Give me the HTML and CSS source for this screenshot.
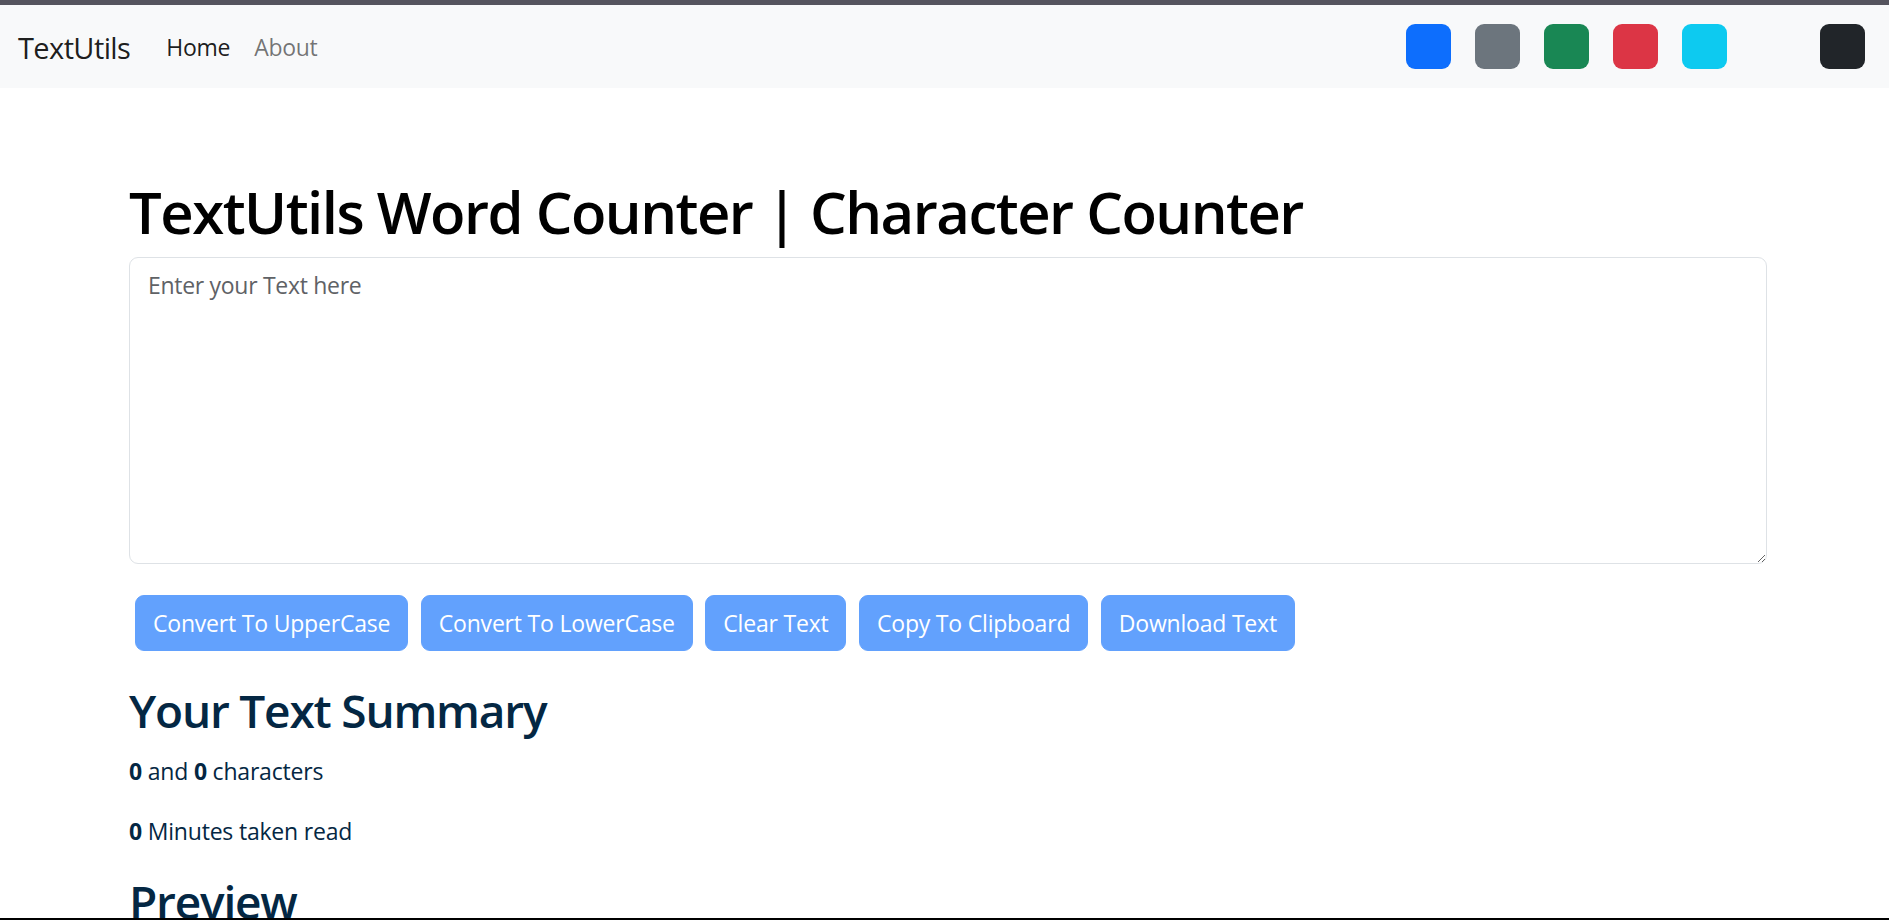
FILE: index.html
```html
<!DOCTYPE html>
<html lang="en">
<head>
<meta charset="utf-8">
<title>TextUtils - Home</title>
<link rel="stylesheet" href="styles.css">
</head>
<body>
<div class="frame">
  <nav class="navbar">
    <a class="brand" href="#">TextUtils</a>
    <ul class="nav-links">
      <li><a class="nav-link active" href="#">Home</a></li>
      <li><a class="nav-link" href="#">About</a></li>
    </ul>
    <div class="swatches">
      <span class="swatch sw-primary"></span>
      <span class="swatch sw-secondary"></span>
      <span class="swatch sw-success"></span>
      <span class="swatch sw-danger"></span>
      <span class="swatch sw-info"></span>
      <span class="swatch sw-light"></span>
      <span class="swatch sw-dark"></span>
    </div>
  </nav>
  <main class="container">
    <h1 class="title">TextUtils Word Counter | Character Counter</h1>
    <textarea class="text-input" placeholder="Enter your Text here"></textarea>
    <div class="actions">
      <button class="btn" disabled>Convert To UpperCase</button>
      <button class="btn" disabled>Convert To LowerCase</button>
      <button class="btn" disabled>Clear Text</button>
      <button class="btn" disabled>Copy To Clipboard</button>
      <button class="btn" disabled>Download Text</button>
    </div>
    <section class="summary">
      <h2 class="section-title">Your Text Summary</h2>
      <p class="stat"><b>0</b> and <b>0</b> characters</p>
      <p class="stat"><b>0</b> Minutes taken read</p>
      <h2 class="section-title preview-title">Preview</h2>
      <p class="stat">Nothing to preview!</p>
    </section>
  </main>
</div>
</body>
</html>
```

FILE: styles.css
```css
* { box-sizing: border-box; }

html, body {
  margin: 0;
  padding: 0;
  background: #ffffff;
}

body {
  font-family: "Open Sans", "Noto Sans", sans-serif;
  color: #212529;
}

.frame {
  height: 920px;
  overflow: hidden;
  border-top: 5px solid #55545e;
  border-bottom: 2px solid #000000;
  display: flex;
  flex-direction: column;
}

/* Navbar */
.navbar {
  flex: 0 0 83px;
  display: flex;
  align-items: center;
  background: #f8f9fa;
  padding: 2px 24px 0 18px;
}

.brand {
  font-size: 29px;
  letter-spacing: -0.6px;
  color: rgba(0, 0, 0, 0.9);
  text-decoration: none;
  margin-right: 24px;
  line-height: 1.5;
}

.nav-links {
  list-style: none;
  margin: 0;
  padding: 0;
  display: flex;
}

.nav-link {
  display: block;
  padding: 8px 12px;
  font-size: 23px;
  letter-spacing: -0.3px;
  line-height: 1.5;
  color: rgba(0, 0, 0, 0.55);
  text-decoration: none;
}

.nav-link.active {
  color: rgba(0, 0, 0, 0.9);
}

.swatches {
  margin-left: auto;
  margin-top: -2px;
  display: flex;
  gap: 24px;
}

.swatch {
  display: block;
  width: 45px;
  height: 45px;
  border-radius: 9px;
}

.sw-primary { background: #0d6efd; }
.sw-secondary { background: #6c757d; }
.sw-success { background: #198754; }
.sw-danger { background: #dc3545; }
.sw-info { background: #0dcaf0; }
.sw-light { background: #f8f9fa; }
.sw-dark { background: #212529; }

/* Main */
.container {
  margin-left: 129px;
  width: 1638px;
}

.title {
  margin: 88px 0 9px;
  font-size: 58px;
  font-weight: 600;
  letter-spacing: -1.5px;
  line-height: 72px;
  color: #000000;
}

.text-input {
  display: block;
  width: 100%;
  height: 307px;
  padding: 9px 18px;
  font-family: "Open Sans", "Noto Sans", sans-serif;
  font-size: 23px;
  letter-spacing: -0.3px;
  line-height: 36px;
  color: #212529;
  background: #ffffff;
  border: 1.5px solid #dee2e6;
  border-radius: 9px;
  resize: vertical;
  outline: none;
}

.text-input::placeholder {
  color: #5f6266;
  opacity: 1;
}

.actions {
  display: flex;
  gap: 12.5px;
  padding-left: 6px;
  margin-top: 31px;
}

.btn {
  height: 56px;
  padding: 9px 17px;
  font-family: "Open Sans", "Noto Sans", sans-serif;
  font-size: 23px;
  letter-spacing: -0.2px;
  line-height: 36px;
  color: #ffffff;
  background: #62a1fd;
  border: 1px solid #62a1fd;
  border-radius: 9px;
}

.summary {
  color: #042743;
}

.section-title {
  margin: 31px 0 13px;
  font-size: 46px;
  font-weight: 600;
  letter-spacing: -1.2px;
  line-height: 57.6px;
}

.preview-title {
  margin-top: 0;
}

.stat {
  margin: 0 0 24px;
  font-size: 23px;
  letter-spacing: -0.2px;
  line-height: 36px;
}

.stat b {
  font-weight: 700;
}
```
